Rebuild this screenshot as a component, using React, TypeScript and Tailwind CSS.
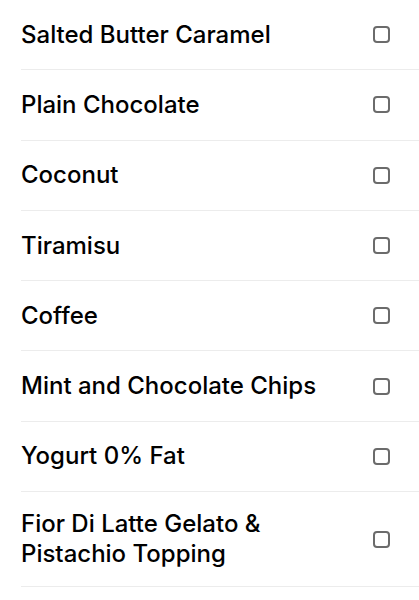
import React from 'react';

const flavours = [
  'Salted Butter Caramel',
  'Plain Chocolate',
  'Coconut',
  'Tiramisu',
  'Coffee',
  'Mint and Chocolate Chips',
  'Yogurt 0% Fat',
  'Fior Di Latte Gelato & Pistachio Topping',
];

export default function App() {
  return (
    <div className="min-h-screen bg-white pl-[21px] text-black" style={{ fontFamily: 'Inter, "Noto Sans", sans-serif' }}>
      {flavours.map((name) => (
        <label
          key={name}
          className="flex min-h-[70.3px] items-center justify-between gap-6 border-b border-[#ececec] py-[17px] pr-[29px]"
        >
          <span className="text-[24px] leading-[30px] font-medium tracking-[0px]">{name}</span>
          <span className="h-[17px] w-[17px] shrink-0 rounded-[4px] border-2 border-[#6b6b6b]" />
        </label>
      ))}
    </div>
  );
}
